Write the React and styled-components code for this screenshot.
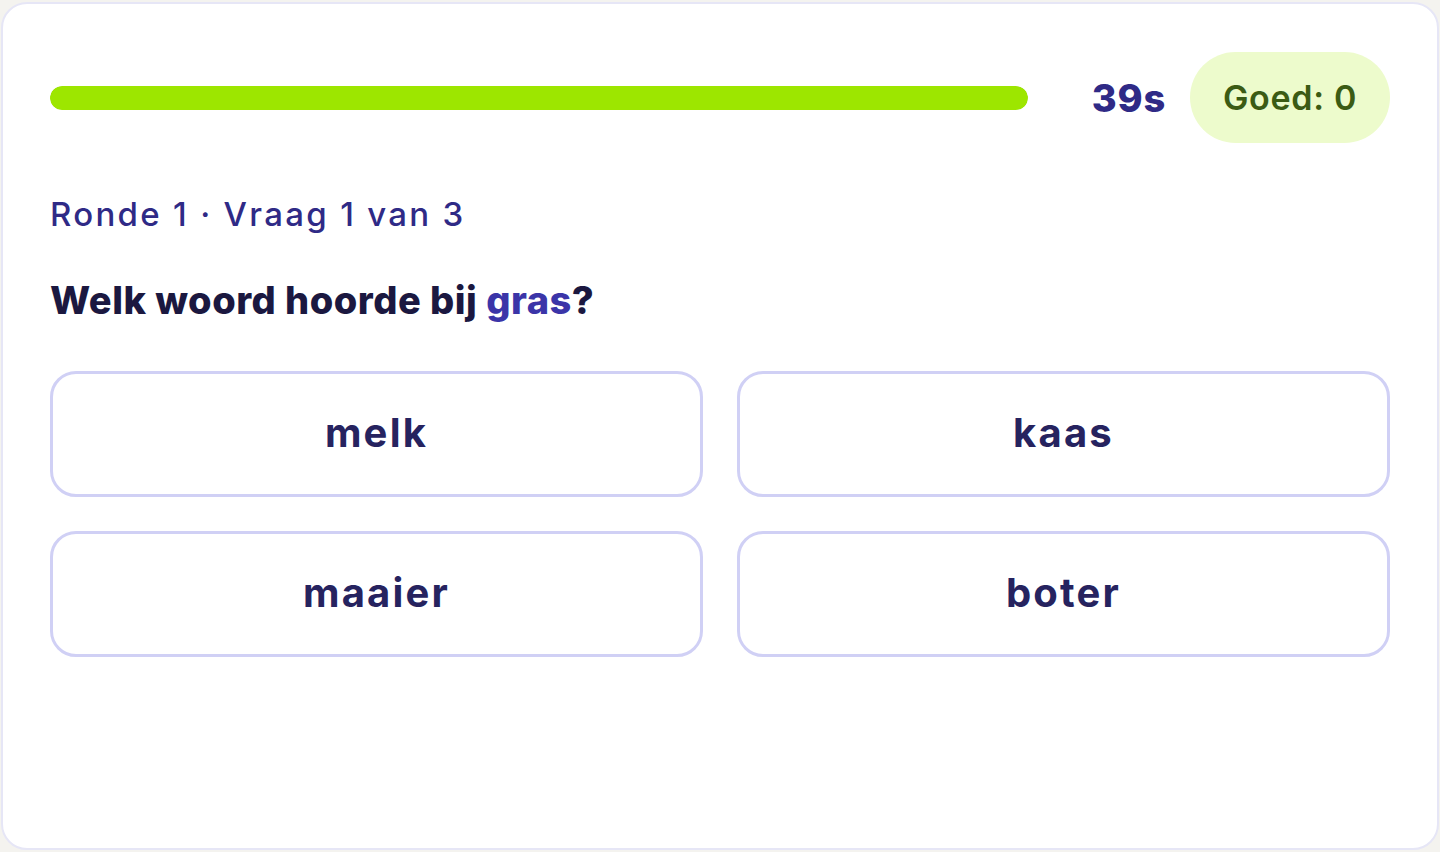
import React from "react";
import styled, { createGlobalStyle } from "styled-components";

const GlobalStyle = createGlobalStyle`
  * { box-sizing: border-box; }
  html, body {
    margin: 0;
    padding: 0;
    background: #f4f3ef;
    font-family: Inter, "Noto Sans", sans-serif;
  }
  #root {
    padding: 2px 1px 0 1px;
  }
`;

const Card = styled.div`
  width: 1438px;
  height: 848px;
  background: #ffffff;
  border: 2px solid #e6e6f6;
  border-radius: 26px;
  padding: 48px 47px;
`;

const TopRow = styled.div`
  display: flex;
  align-items: center;
  gap: 24px;
  height: 91px;
`;

const Track = styled.div`
  flex: 1;
  height: 24px;
  margin-right: 40px;
  border-radius: 12px;
  background: #eef0f4;
  overflow: hidden;
`;

const Fill = styled.div`
  height: 100%;
  border-radius: 12px;
  background: #9de600;
`;

const Timer = styled.div`
  font-size: 38px;
  font-weight: 800;
  color: #2f2a86;
  letter-spacing: 0.8px;
`;

const ScorePill = styled.div`
  width: 200px;
  height: 91px;
  border-radius: 46px;
  background: #edfbcc;
  color: #3b5b14;
  font-size: 34px;
  font-weight: 600;
  letter-spacing: 0.7px;
  display: flex;
  align-items: center;
  justify-content: center;
`;

const Meta = styled.div`
  margin-top: 51px;
  font-size: 33px;
  font-weight: 500;
  letter-spacing: 2.3px;
  color: #2f2a86;
`;

const Question = styled.h2`
  margin: 43px 0 0;
  font-size: 38px;
  font-weight: 800;
  letter-spacing: 0.5px;
  color: #1b1840;

  span {
    color: #3b35a8;
  }
`;

const Options = styled.div`
  margin-top: 48px;
  display: grid;
  grid-template-columns: 1fr 1fr;
  gap: 34px;
`;

const Option = styled.button`
  height: 126px;
  border: 3px solid #d0d0f5;
  border-radius: 26px;
  background: #ffffff;
  font-family: inherit;
  font-size: 40px;
  font-weight: 700;
  letter-spacing: 2.2px;
  color: #26235f;
  padding: 0 0 3px;
  cursor: pointer;
`;

const options = ["melk", "kaas", "maaier", "boter"];

export default function App() {
  const progress = 100;
  return (
    <>
      <GlobalStyle />
      <Card>
        <TopRow>
          <Track>
            <Fill style={{ width: `${progress}%` }} />
          </Track>
          <Timer>39s</Timer>
          <ScorePill>Goed: 0</ScorePill>
        </TopRow>
        <Meta>Ronde 1 · Vraag 1 van 3</Meta>
        <Question>
          Welk woord hoorde bij <span>gras</span>?
        </Question>
        <Options>
          {options.map((o) => (
            <Option key={o}>{o}</Option>
          ))}
        </Options>
      </Card>
    </>
  );
}
